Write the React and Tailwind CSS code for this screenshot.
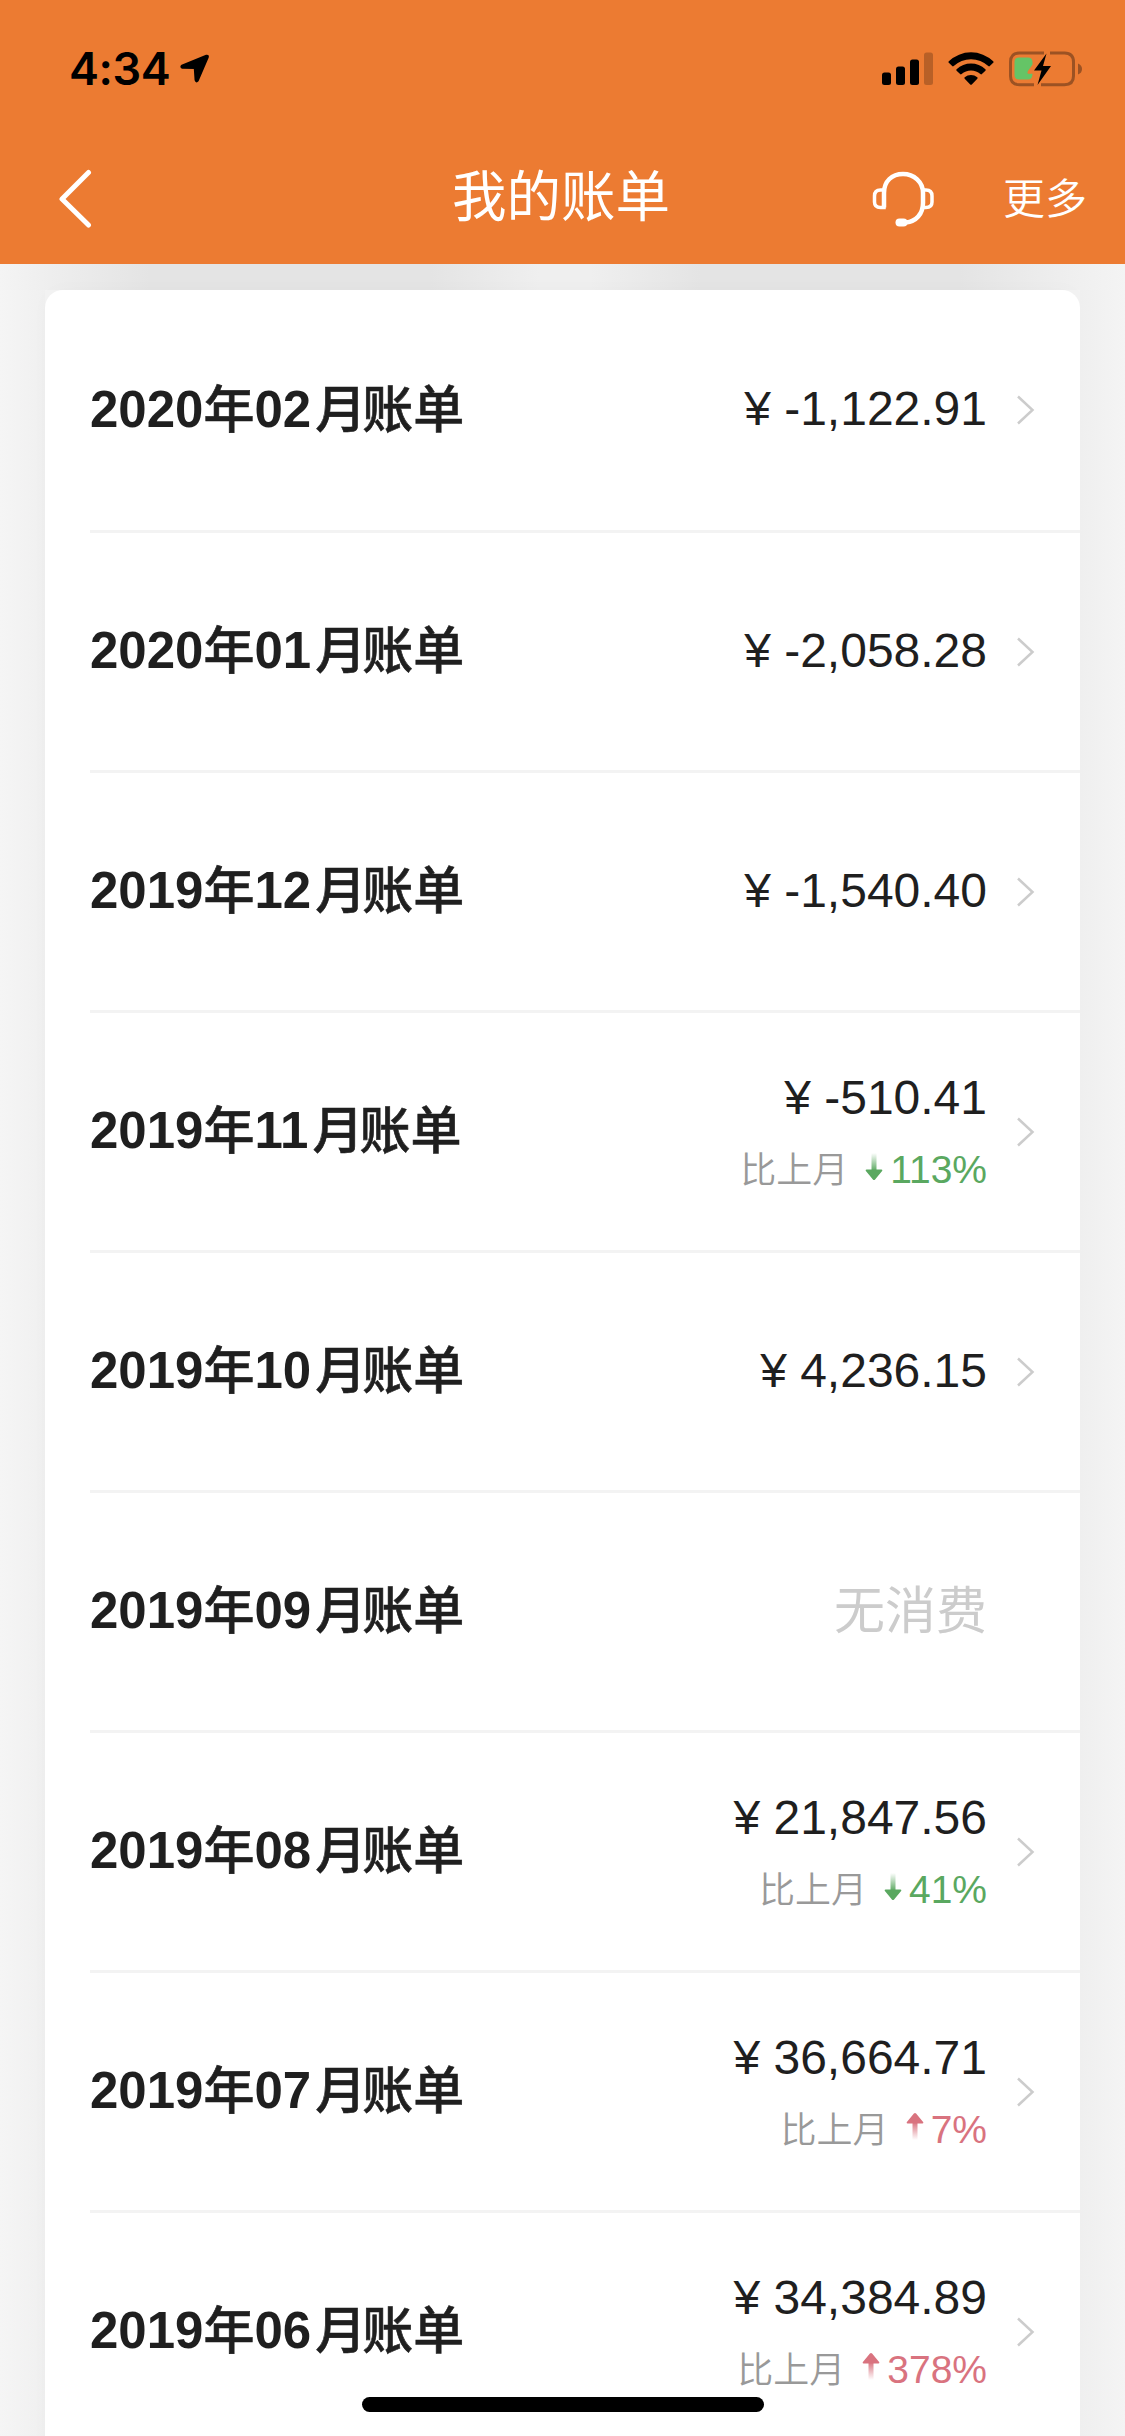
import React from 'react';

const bills = [
  { id: 1, year: '2020', month: '02', amount: '-1,122.91' },
  { id: 2, year: '2020', month: '01', amount: '-2,058.28' },
  { id: 3, year: '2019', month: '12', amount: '-1,540.40' },
  { id: 4, year: '2019', month: '11', amount: '-510.41', trend: 'down', percent: '113%' },
  { id: 5, year: '2019', month: '10', amount: '4,236.15' },
  { id: 6, year: '2019', month: '09', amount: null },
  { id: 7, year: '2019', month: '08', amount: '21,847.56', trend: 'down', percent: '41%' },
  { id: 8, year: '2019', month: '07', amount: '36,664.71', trend: 'up', percent: '7%' },
  { id: 9, year: '2019', month: '06', amount: '34,384.89', trend: 'up', percent: '378%' },
];

const LocationIcon = () => (
  <svg className="w-[32px] h-[32px]" viewBox="0 0 32 32">
    <path
      d="M3 13 27.500 3q1.600-.4 1 1.200L18.500 27.500q-1.200 1.500-1.700-.5L16 14.800 3.500 14.500q-1.500-.7-.5-1.500Z"
      stroke="#000"
      strokeWidth="2.500"
      strokeLinejoin="round"
    />
  </svg>
);

const SignalIcon = () => (
  <svg className="w-[52px] h-[34px]" viewBox="0 0 52 34">
    <rect x="0" y="20.500" width="9" height="12.500" rx="2.500" />
    <rect x="14" y="14.500" width="9" height="18.500" rx="2.500" />
    <rect x="28" y="7.500" width="9" height="25.500" rx="2.500" />
    <rect x="42" y="0.500" width="9" height="32.500" rx="2.500" opacity="0.220" />
  </svg>
);

const WifiIcon = () => (
  <svg className="w-[46px] h-[34px]" viewBox="0 0 46 34">
    <path d="M.8 9.300a32 32 0 0 1 44.400 0c.5.500.5 1 0 1.500l-3.400 3.300c-.5.500-1 .5-1.500 0a25 25 0 0 0-34.600 0c-.5.500-1 .5-1.500 0L.8 10.800c-.5-.5-.5-1 0-1.500Z" />
    <path d="M8.600 17.200a21 21 0 0 1 28.800 0c.5.500.5 1 0 1.500l-3.500 3.400c-.5.500-1 .5-1.500 0a14 14 0 0 0-18.800 0c-.5.500-1 .5-1.500 0l-3.500-3.400c-.5-.5-.5-1 0-1.500Z" />
    <path d="M16.700 25.300a9.800 9.800 0 0 1 12.600 0c.5.500.5 1 0 1.500l-5.500 5.600c-.5.500-1.100.5-1.600 0l-5.500-5.600c-.5-.5-.5-1 0-1.500Z" />
  </svg>
);

const BatteryIcon = () => (
  <svg className="w-[74px] h-[36px]" viewBox="0 0 74 36" fill="none">
    <g stroke="#9c5223" strokeWidth="3">
      <path d="M35 1.900H10.500Q1.500 1.900 1.500 11v14q0 8.700 9 8.700H25" />
      <path d="M41 1.900h14.500q9 0 9 9.100v14q0 8.700-9 8.700H32" />
    </g>
    <path d="M69 12.500q4 1.500 4 5.500t-4 5.500Z" fill="#9c5223" />
    <path
      d="M10 6.500h9q4 0 4.500 4v3L19 20q-1.300 2.500.5 2.700h4q0 5.800-4.500 5.800h-9q-4.500 0-4.500-4.500V11q0-4.500 4.500-4.500Z"
      fill="#65c466"
    />
    <path d="M37.500 2.500 25 19.500h7.500L28.500 34 42 15h-8Z" fill="#000" />
  </svg>
);

const HeadsetIcon = () => (
  <svg className="w-[64px] h-[58px]" viewBox="0 0 64 58" fill="none" stroke="#fff">
    <path d="M13 37.500V23C13 11 21 4 32 4s20 8 20 19v10c0 11-7 18.500-17 19.500" strokeWidth="4.500" />
    <path d="M13 20H9.500q-6 0-6 6v6q0 5.500 6 5.500H13Z" strokeWidth="3.500" />
    <path d="M52 20h3q6 0 6 6v6q0 5.500-6 5.500h-3Z" strokeWidth="3.500" />
    <path d="M28.500 52.500h4" strokeWidth="8" strokeLinecap="round" />
  </svg>
);

const TrendArrow = ({ trend }) => {
  const color = trend === 'down' ? '#5aa860' : '#d9737f';
  const gradientId = `tail-${trend}`;
  return (
    <svg
      className={trend === 'down' ? 'w-[18px] h-[28px]' : 'w-[18px] h-[28px] rotate-180'}
      viewBox="0 0 18 28"
    >
      <defs>
        <linearGradient id={gradientId} x1="0" y1="0" x2="0" y2="1">
          <stop offset="0" stopColor={color} stopOpacity="0" />
          <stop offset="1" stopColor={color} />
        </linearGradient>
      </defs>
      <rect x="6.500" y="0" width="5" height="18" fill={`url(#${gradientId})`} />
      <path d="M1.500 16.500h15q1.500.4.600 1.600l-7 8.500q-1.100 1-2.200 0l-7-8.500q-.9-1.200.6-1.600Z" fill={color} />
    </svg>
  );
};

const StatusBar = () => (
  <div className="h-[132px] pl-[69px] pr-[42px] flex items-start justify-between">
    <div className="flex items-center pt-[42px]">
      <span className="font-['Inter',sans-serif] font-semibold text-[45px] leading-[54px] tracking-[-0.4px] text-black">
        4:34
      </span>
      <div className="ml-[9px]">
        <LocationIcon />
      </div>
    </div>
    <div className="flex items-center pt-[51px]">
      <SignalIcon />
      <div className="ml-[14px]">
        <WifiIcon />
      </div>
      <div className="ml-[15px]">
        <BatteryIcon />
      </div>
    </div>
  </div>
);

const NavBar = () => (
  <div className="h-[132px] grid grid-cols-[1fr_auto_1fr] items-center text-white">
    <button className="pl-[57px] pt-[2px] justify-self-start" aria-label="返回">
      <svg className="w-[36px] h-[60px]" viewBox="0 0 36 60" fill="none">
        <path d="M31.500 3.500 5 30l26.500 26" stroke="#fff" strokeWidth="5" strokeLinecap="round" strokeLinejoin="round" />
      </svg>
    </button>
    <h1 className="text-[54.500px] leading-[80px] pr-[3px] pb-[1px]">我的账单</h1>
    <div className="flex items-center justify-self-end pr-[38px] pt-[2px]">
      <HeadsetIcon />
      <span className="ml-[68px] pt-[2px] text-[42px] leading-[60px] font-[350]">更多</span>
    </div>
  </div>
);

const BillRow = ({ bill, first }) => (
  <div
    className={`flex items-center justify-between pr-[45px] border-b-3 border-[#f3f3f3] ${
      first ? 'h-[243px]' : 'h-[240px]'
    }`}
  >
    <h2 className="flex text-[51px] leading-[72px] font-bold">
      <span>{bill.year}</span>
      <span className="font-medium pt-[1px] [-webkit-text-stroke:0.6px_#1f1f1f]">年</span>
      <span>{bill.month}</span>
      <span className="font-medium pt-[1px] ml-[4px] mr-[-4px] [-webkit-text-stroke:0.6px_#1f1f1f]">月</span>
      <span className="font-medium pt-[1px] [-webkit-text-stroke:0.6px_#1f1f1f]">账单</span>
    </h2>
    <div className="flex items-center">
      <div className={`flex flex-col items-end ${bill.trend ? 'pt-[5px]' : bill.amount ? 'pb-[2px]' : ''}`}>
        {bill.amount ? (
          <p className="text-[48px] leading-[72px] whitespace-pre">¥ {bill.amount}</p>
        ) : (
          <p className="text-[51px] leading-[72px] text-[#cccccc]">无消费</p>
        )}
        {bill.trend && (
          <div className="flex items-center h-[72px]">
            <span className="text-[36px] text-[#999999] font-[350] pt-[2px]">比上月</span>
            <div className={`ml-[17px] mr-[7px] ${bill.trend === 'down' ? 'pb-[7px]' : 'pb-[9px]'}`}>
              <TrendArrow trend={bill.trend} />
            </div>
            <span
              className={`text-[39px] ${bill.trend === 'down' ? 'text-[#5aa860]' : 'text-[#d9737f]'}`}
            >
              {bill.percent}
            </span>
          </div>
        )}
      </div>
      {/* months without spending have no detail page */}
      <div className="w-[48px] flex justify-end">
        {bill.amount && (
          <svg className="w-[19px] h-[30px]" viewBox="0 0 19 30" fill="none">
            <path d="M2 1.500 16.500 15 2 28.500" stroke="#cccccc" strokeWidth="2.500" />
          </svg>
        )}
      </div>
    </div>
  </div>
);

const App = () => {
  return (
    <div className="relative w-[1125px] h-[2436px] overflow-hidden bg-[#f3f3f3] text-[#1f1f1f] font-['Liberation_Sans','Noto_Sans_CJK_SC',sans-serif]">
      <header className="bg-[#ec7b32]">
        <StatusBar />
        <NavBar />
      </header>

      <div className="h-[26px] bg-[linear-gradient(90deg,#f4f4f4_0px,#eeeeee_50px,#e4e4e4_150px,#e4e4e4_430px,#efefef_540px,#efefef_590px,#e4e4e4_700px,#e4e4e4_960px,#eeeeee_1060px,#f4f4f4_1125px)]" />

      <div className="flex">
        <div className="w-[45px] h-[2146px] shrink-0 bg-linear-to-r from-[#f5f5f5] to-[#f0f0f0]" />
        <main className="w-[1035px] pl-[45px] shrink-0 bg-white rounded-t-[18px] shadow-[0_0_20px_rgba(0,0,0,0.02)]">
          {bills.map((bill, index) => (
            <BillRow key={bill.id} bill={bill} first={index === 0} />
          ))}
        </main>
        <div className="w-[45px] h-[2146px] shrink-0 bg-linear-to-r from-[#efefef] to-[#f4f4f4]" />
      </div>

      {/* Home indicator */}
      <div className="absolute left-[362px] top-[2397px] w-[402px] h-[15px] rounded-full bg-black" />
    </div>
  );
};

export default App;
